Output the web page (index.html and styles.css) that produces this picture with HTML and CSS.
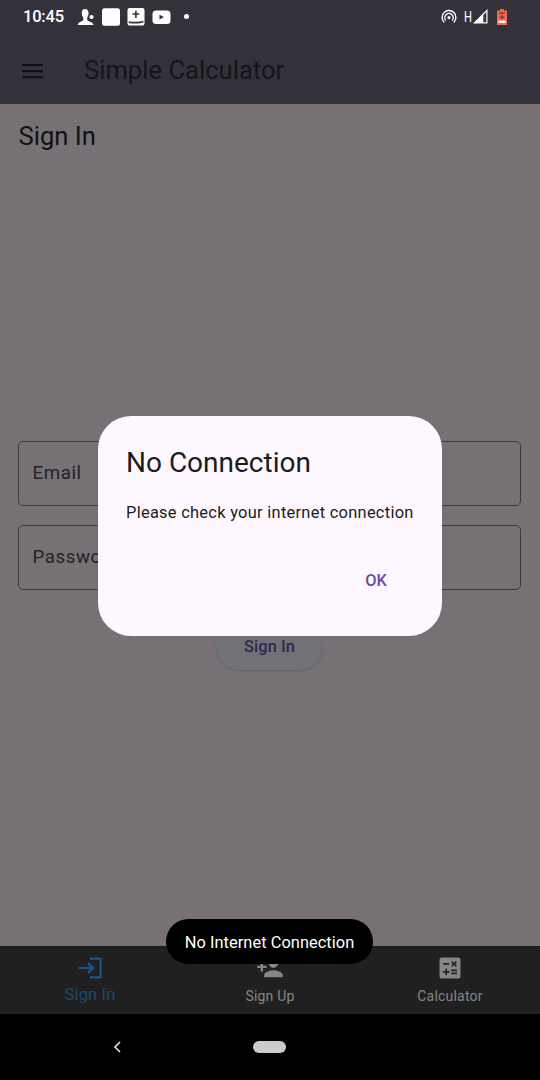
FILE: index.html
```html
<!DOCTYPE html>
<html lang="en">
<head>
<meta charset="utf-8">
<title>Simple Calculator</title>
<link rel="stylesheet" href="styles.css">
</head>
<body>
<div class="screen">
  <header class="top">
    <div class="status">
      <span class="clock">10:45</span>
      <div class="notices">
        <svg width="18" height="18" viewBox="0 0 18 18"><path d="M8 1C5.500 1 4.600 3 4.800 5.500C5 7.500 5.500 8.500 6.300 9.600V12C5.500 13.800 1.500 13.500 .7 17H16.500C15.800 13.500 10.800 13.800 10.200 12V9.600C11.400 8 11.600 6 11.500 4.500C11.300 2.300 10.200 1 8 1Z"/><circle cx="14.500" cy="9" r="2.100"/></svg>
        <svg width="18" height="18" viewBox="0 0 18 18"><rect width="18" height="17.500" y=".3" rx="2.500"/></svg>
        <svg width="18" height="18" viewBox="0 0 18 18"><rect x=".5" width="17" height="17.500" rx="2"/><path class="cut" d="M8.100 2.800H9.700V5.200H12.200V6.800H9.700V10H8.100V6.800H5.600V5.200H8.100ZM1.500 13.200C6 14 12 14 16.500 12.700V14.300C14 15.800 5 15.800 2 15Z"/></svg>
        <svg width="19" height="18" viewBox="0 0 19 18"><rect x=".5" y="2.500" width="18" height="13.500" rx="3.500"/><path class="cut" d="M7.500 6.700L12 9.100L7.500 11.500Z"/></svg>
        <i class="dot"></i>
      </div>
      <div class="signals">
        <svg width="16" height="16" viewBox="0 0 16 16"><g class="wave"><path d="M3.200 13.400A6.900 6.900 0 1 1 12.800 13.400M4.900 11.500A4.200 4.200 0 1 1 11.100 11.500"/></g><circle cx="8" cy="8.600" r="1.600"/></svg>
        <span class="network">H</span>
        <svg class="bars" width="15" height="15" viewBox="0 0 15 15"><path d="M0 14.500L14.500 0V14.500ZM10.300 6V13.300H13.300V3Z" fill-rule="evenodd"/></svg>
        <svg class="battery" width="10" height="16" viewBox="0 0 10 16"><path d="M3 0H7V1.600H10V16H0V1.600H3Z"/><path class="cut" d="M2 3.500H8V4.700H2ZM4.300 5.700H5.700V7.500H7.500V8.700H5.700V10.500H4.300V8.700H2.500V7.500H4.300Z"/><path class="charge" d="M1.500 11.500H8.500V14H1.500Z"/></svg>
      </div>
    </div>
    <div class="appbar">
      <svg width="22" height="16" viewBox="0 0 22 16"><path d="M0 1H21V3.300H0ZM0 7H21V9.300H0ZM0 13H21V15.300H0Z"/></svg>
      <h1 class="app-title">Simple Calculator</h1>
    </div>
  </header>
  <main class="page">
    <h2 class="page-title">Sign In</h2>
    <form class="form">
      <div class="field">Email</div>
      <div class="field">Password</div>
      <div class="submit">Sign In</div>
    </form>
  </main>
  <nav class="tabs">
    <div class="tab active">
      <svg width="28" height="28" viewBox="0 0 24 24"><path d="M11 7L9.600 8.400L12.200 11H2V13H12.200L9.600 15.600L11 17L16 12ZM20 19H12V21H20C21.100 21 22 20.100 22 19V5C22 3.900 21.100 3 20 3H12V5H20Z"/></svg>
      <span>Sign In</span>
    </div>
    <div class="tab">
      <svg width="28" height="28" viewBox="0 0 24 24"><path d="M15 12C17.210 12 19 10.210 19 8S17.210 4 15 4S11 5.790 11 8S12.790 12 15 12ZM6 10V7H4V10H1V12H4V15H6V12H9V10ZM15 14C12.330 14 7 15.340 7 18V20H23V18C23 15.340 17.670 14 15 14Z"/></svg>
      <span>Sign Up</span>
    </div>
    <div class="tab">
      <svg width="28" height="28" viewBox="0 0 24 24"><path fill-rule="evenodd" d="M19 3H5C3.900 3 3 3.900 3 5V19C3 20.100 3.900 21 5 21H19C20.100 21 21 20.100 21 19V5C21 3.900 20.100 3 19 3ZM13.030 7.060L14.090 6L15.500 7.410L16.910 6L17.970 7.060L16.560 8.470L17.970 9.880L16.910 10.940L15.500 9.530L14.090 10.940L13.030 9.880L14.440 8.470ZM6.250 7.720H11.250V9.220H6.250ZM11.500 16H9.500V18H8V16H6V14.500H8V12.500H9.500V14.500H11.500ZM18 17.250H13V15.750H18ZM18 14.750H13V13.250H18Z"/></svg>
      <span>Calculator</span>
    </div>
  </nav>
  <div class="system">
    <svg width="9" height="12" viewBox="0 0 9 12"><path d="M7 1L2 6L7 11"/></svg>
    <i class="home"></i>
  </div>

  <section class="dialog">
    <h2 class="dialog-title">No Connection</h2>
    <p class="dialog-text">Please check your internet connection</p>
    <div class="dialog-action">OK</div>
  </section>
  <div class="toast">No Internet Connection</div>
</div>
</body>
</html>
```
FILE: styles.css
```css
* { box-sizing: border-box; }
body { margin: 0; font-family: Roboto, "Liberation Sans", sans-serif; }
h1, h2, p { margin: 0; font-weight: 400; }
svg { display: block; flex: none; }
.screen { position: relative; width: 540px; height: 1080px; display: flex; flex-direction: column; overflow: hidden; background: #777175; }
.top { height: 104px; background: #33323b; }
.status { height: 33px; display: flex; align-items: center; padding: 0 33px 0 23px; color: #fff; fill: #fff; }
.clock { width: 54px; font-size: 16.500px; font-weight: 500; letter-spacing: -.2px; }
.notices { display: flex; align-items: center; gap: 7.200px; margin-left: -.5px; }
.cut { fill: #33323b; }
.dot { width: 5px; height: 5px; margin-left: 5.500px; border-radius: 50%; background: #fff; }
.signals { display: flex; align-items: center; margin-left: auto; }
.wave { fill: none; stroke: #fff; stroke-width: 1.400; }
.network { margin-left: 7px; font-size: 14px; line-height: 16px; transform: scaleX(.8); transform-origin: left; }
.bars { margin-left: -1px; }
.battery { margin-left: 9px; fill: #f1694b; }
.battery .cut { fill: #753c3d; }
.charge { fill: #fff; }
.appbar { height: 75px; display: flex; align-items: center; gap: 40px; padding-left: 22px; fill: #101019; color: #15141c; }
.app-title, .page-title { font-size: 25.600px; line-height: 32px; }
.app-title { margin-top: -1px; }
.page { flex: 1; padding: 16px 19px 0 18px; }
.page-title { padding-left: .5px; color: #111014; }
.form { display: flex; flex-direction: column; gap: 19px; padding-top: 289px; }
.field { height: 65px; padding-left: 13.500px; border: 1px solid #3b383c; border-radius: 5px; font-size: 18.700px; line-height: 62px; letter-spacing: .58px; color: #242226; }
.submit { align-self: center; width: 107px; height: 47px; margin-top: 14px; border-radius: 24px; background: #727177; box-shadow: 0 1px 2px #656067; color: #302850; font-size: 16.400px; font-weight: 500; line-height: 47px; text-align: center; letter-spacing: .1px; }
.tabs { height: 68px; display: flex; background: #202020; }
.tab { flex: 1; display: flex; flex-direction: column; align-items: center; padding-top: 8px; color: #868686; fill: #868686; font-size: 14px; line-height: 20px; letter-spacing: .2px; }
.tab span { margin-top: 4px; }
.active { color: #1a496f; fill: #1a5588; font-size: 16.400px; }
.active span { margin-top: 3px; }
.system { height: 66px; display: flex; align-items: center; padding-left: 113px; background: #000; fill: none; stroke: #ddd; stroke-width: 1.700; }
.home { width: 33px; height: 12px; margin-left: 131px; border-radius: 6px; background: #ccc; }
.dialog { position: absolute; left: 98px; top: 416px; width: 343.500px; height: 220px; padding: 28px; border-radius: 33px; background: #fef7ff; color: #1d1b20; }
.dialog-title { font-size: 28px; line-height: 37px; }
.dialog-text { margin-top: 20px; font-size: 16.400px; line-height: 24px; letter-spacing: .29px; white-space: nowrap; }
.dialog-action { margin: 45px 26.500px 0; color: #6350a0; font-size: 16.400px; font-weight: 500; line-height: 22px; letter-spacing: .1px; text-align: right; }
.toast { position: absolute; left: 166px; top: 919px; width: 207px; height: 45px; border-radius: 23px; background: #000; color: #fff; font-size: 16.400px; line-height: 47px; letter-spacing: .05px; text-align: center; white-space: nowrap; }
```
